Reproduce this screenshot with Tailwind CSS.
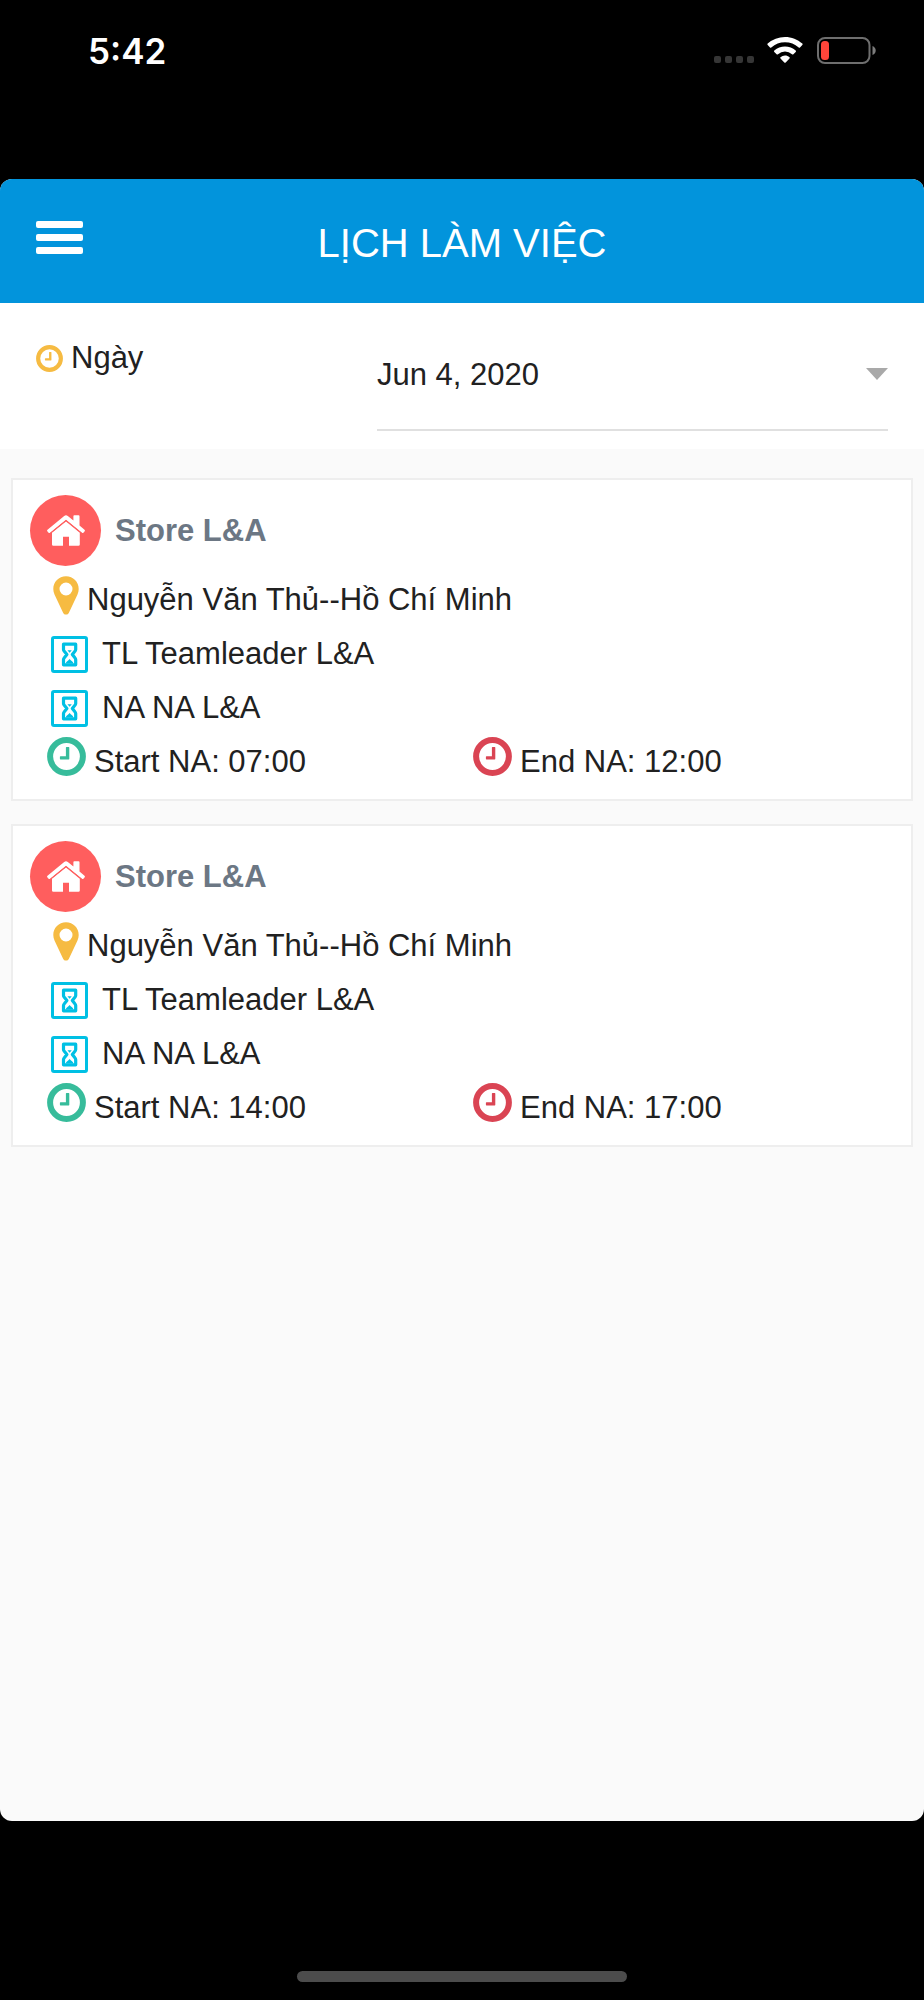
<!DOCTYPE html>
<html lang="vi">
<head>
<meta charset="utf-8">
<meta name="viewport" content="width=device-width, initial-scale=1">
<title>Lịch làm việc</title>
<script src="https://cdn.jsdelivr.net/npm/@tailwindcss/browser@4"></script>
</head>
<body class="bg-black">
<svg class="hidden" aria-hidden="true">
  <symbol id="clock" viewBox="0 0 39 39"><circle cx="19.5" cy="19.5" r="16.4" fill="none" stroke="currentColor" stroke-width="6"/><path d="M18.900 10.600q0-.6.6-.6h2.200q.6 0 .6.6v11.200q0 .6-.6.6h-8.200q-.6 0-.6-.6v-2q0-.6.6-.6h5.400z" fill="currentColor"/></symbol>
  <symbol id="pin" viewBox="0 0 26 39"><path fill="currentColor" fill-rule="evenodd" d="M13 .3C5.800 .3.300 5.900.300 13c0 2 .4 3.800 1.200 5.500l8.600 18.200c.5 1.200 1.600 1.900 2.900 1.900s2.400-.7 2.900-1.900l8.600-18.200c.8-1.700 1.200-3.500 1.200-5.500C25.700 5.900 20.200.3 13 .3zm0 6.200a6.500 6.500 0 1 1 0 13a6.500 6.500 0 0 1 0-13z"/></symbol>
  <symbol id="hourglass" viewBox="0 0 37 37"><rect x="1.500" y="1.500" width="34" height="34" rx="1.500" fill="none" stroke="currentColor" stroke-width="3"/><path d="M12.500 8.200h12.200v5.200q0 1-.8 1.900l-2.600 3.200 2.600 3.200q.8.900.8 1.900v5.200H12.500v-5.200q0-1 .8-1.900l2.600-3.200-2.600-3.200q-.8-.9-.8-1.900z" fill="none" stroke="currentColor" stroke-width="3.200" stroke-linejoin="round"/><path d="M16.400 14.200h4.400l-2.200 2.600zM14.800 27.500c0-2 2.400-2.400 3.800-4.400 1.400 2 3.800 2.400 3.800 4.400z" fill="currentColor"/></symbol>
  <symbol id="home" viewBox="0 0 38 31"><path fill="currentColor" d="M19 6.400 5 17.800v11.600q0 1.400 1.400 1.400H16v-9h6v9h9.400q1.400 0 1.400-1.400V17.800z"/><path fill="currentColor" d="M17.200 1 .500 14.700q-.8.700-.2 1.500l1.300 1.500q.6.700 1.400.1L19 4.700 35 17.800q.8.600 1.400-.1l1.300-1.500q.6-.8-.2-1.500l-5-4.100V1.200q0-.9-.9-.9h-4.300q-.9 0-.9.900v4.200L20.800 1q-1.800-1.400-3.600 0z"/><path d="M3.200 18.400 19 5.500l15.800 12.900" fill="none" stroke="#ff5e5e" stroke-width="1"/></symbol>
</svg>
<div class="flex min-h-screen flex-col bg-black font-['Liberation_Sans',Arial,sans-serif] text-[31px] text-[#212121]">
  <div class="flex h-[179px] items-start justify-between pr-12 pl-[88px] text-white">
    <time class="mt-7 font-[Inter,sans-serif] text-[35px] leading-[46px] font-semibold">5:42</time>
    <div class="mt-[37px] flex h-[27px]">
      <div class="mr-[13px] flex items-end gap-1 pb-px">
        <span class="size-[7px] rounded-xs bg-[#363636]"></span><span class="size-[7px] rounded-xs bg-[#363636]"></span><span class="size-[7px] rounded-xs bg-[#363636]"></span><span class="size-[7px] rounded-xs bg-[#363636]"></span>
      </div>
      <svg class="mr-3.5 h-[27px] w-9" viewBox="0 0 36 27" fill="currentColor"><path d="M18 0c6.600 0 12.600 2.500 17.300 6.600q.7.700 0 1.400l-2.300 2.400q-.6.600-1.300 0a20.500 20.500 0 0 0-27.400 0q-.7.600-1.300 0L.7 8q-.7-.7 0-1.400A26 26 0 0 1 18 0z"/><path d="M18 9.400c4 0 7.800 1.500 10.700 4.100q.7.700 0 1.400l-2.300 2.300q-.7.700-1.400 0a10.500 10.500 0 0 0-14 0q-.7.700-1.400 0l-2.300-2.300q-.7-.7 0-1.400A16 16 0 0 1 18 9.400z"/><path d="M18 18.600c1.700 0 3.200.6 4.500 1.600q.7.600 0 1.300l-3.800 4q-.7.700-1.400 0l-3.800-4q-.7-.7 0-1.300A7 7 0 0 1 18 18.600z"/></svg>
      <svg class="h-[27px] w-[59px]" viewBox="0 0 59 27"><rect x="1" y="1" width="51.500" height="25" rx="7" fill="none" stroke="#6e6e6e" stroke-width="2"/><rect x="4" y="4" width="8" height="19" rx="3.500" fill="#ff453a"/><path d="M55.500 9v9q3.200-1.500 3.200-4.500T55.500 9z" fill="#7c7c7c"/></svg>
    </div>
  </div>

  <div class="flex flex-1 flex-col overflow-hidden rounded-xl bg-[#fafafa]">
    <header class="grid h-[124px] grid-cols-[1fr_auto_1fr] items-center bg-[#0294dc] px-9 text-white">
      <button type="button" aria-label="Menu" class="flex w-[47px] flex-col gap-1.5 pb-2">
        <span class="h-[7px] rounded-xs bg-white"></span><span class="h-[7px] rounded-xs bg-white"></span><span class="h-[7px] rounded-xs bg-white"></span>
      </button>
      <h1 class="pt-1 text-[40px]">LỊCH LÀM VIỆC</h1>
    </header>

    <div class="flex h-[146px] items-start justify-between bg-white px-9">
      <label for="date" class="flex items-center gap-2 pt-7 leading-[54px]">
        <svg class="size-[27px] text-[#f6bb42]"><use href="#clock"/></svg>Ngày
      </label>
      <div class="relative w-3/5 max-w-[511px]">
        <select id="date" class="h-32 w-full appearance-none border-b-2 border-[#e0e0e0] bg-transparent pt-[18px] pb-0">
          <option>Jun 4, 2020</option>
        </select>
        <svg class="pointer-events-none absolute top-[65px] right-0 h-3 w-[22px]" viewBox="0 0 22 12"><path d="M0 0h22L11 12z" fill="#a9a9a9"/></svg>
      </div>
    </div>

    <main class="flex flex-col gap-[23px] px-[11px] pt-[29px]">
      <article class="border-2 border-[#eeeeee] bg-white pt-[15px] pb-2.5 leading-[54px]">
        <div class="mb-[7px] flex items-center gap-3.5 pl-[17px]">
          <span class="flex size-[71px] items-center justify-center rounded-full bg-[#ff5e5e] text-white"><svg class="h-[31px] w-[38px]"><use href="#home"/></svg></span>
          <h2 class="font-bold text-[#6c7784]">Store L&amp;A</h2>
        </div>
        <p class="flex gap-2 pl-10"><svg class="mt-[3px] h-[39px] w-[26px] text-[#f6bb42]"><use href="#pin"/></svg>Nguyễn Văn Thủ--Hồ Chí Minh</p>
        <p class="flex items-center gap-3.5 pl-[38px]"><svg class="size-[37px] text-[#00c0e4]"><use href="#hourglass"/></svg>TL Teamleader L&amp;A</p>
        <p class="flex items-center gap-3.5 pl-[38px]"><svg class="size-[37px] text-[#00c0e4]"><use href="#hourglass"/></svg>NA NA L&amp;A</p>
        <div class="grid grid-cols-[426px_1fr] pl-[34px]">
          <p class="flex gap-2"><svg class="mt-0.5 size-[39px] text-[#37bc9b]"><use href="#clock"/></svg>Start NA: 07:00</p>
          <p class="flex gap-2"><svg class="mt-0.5 size-[39px] text-[#da4453]"><use href="#clock"/></svg>End NA: 12:00</p>
        </div>
      </article>
      <article class="border-2 border-[#eeeeee] bg-white pt-[15px] pb-2.5 leading-[54px]">
        <div class="mb-[7px] flex items-center gap-3.5 pl-[17px]">
          <span class="flex size-[71px] items-center justify-center rounded-full bg-[#ff5e5e] text-white"><svg class="h-[31px] w-[38px]"><use href="#home"/></svg></span>
          <h2 class="font-bold text-[#6c7784]">Store L&amp;A</h2>
        </div>
        <p class="flex gap-2 pl-10"><svg class="mt-[3px] h-[39px] w-[26px] text-[#f6bb42]"><use href="#pin"/></svg>Nguyễn Văn Thủ--Hồ Chí Minh</p>
        <p class="flex items-center gap-3.5 pl-[38px]"><svg class="size-[37px] text-[#00c0e4]"><use href="#hourglass"/></svg>TL Teamleader L&amp;A</p>
        <p class="flex items-center gap-3.5 pl-[38px]"><svg class="size-[37px] text-[#00c0e4]"><use href="#hourglass"/></svg>NA NA L&amp;A</p>
        <div class="grid grid-cols-[426px_1fr] pl-[34px]">
          <p class="flex gap-2"><svg class="mt-0.5 size-[39px] text-[#37bc9b]"><use href="#clock"/></svg>Start NA: 14:00</p>
          <p class="flex gap-2"><svg class="mt-0.5 size-[39px] text-[#da4453]"><use href="#clock"/></svg>End NA: 17:00</p>
        </div>
      </article>
    </main>
  </div>

  <div class="flex h-[179px] items-end justify-center pb-[18px]">
    <div class="h-[11px] w-[330px] rounded-full bg-[#4c4c4c]"></div>
  </div>
</div>
</body>
</html>
